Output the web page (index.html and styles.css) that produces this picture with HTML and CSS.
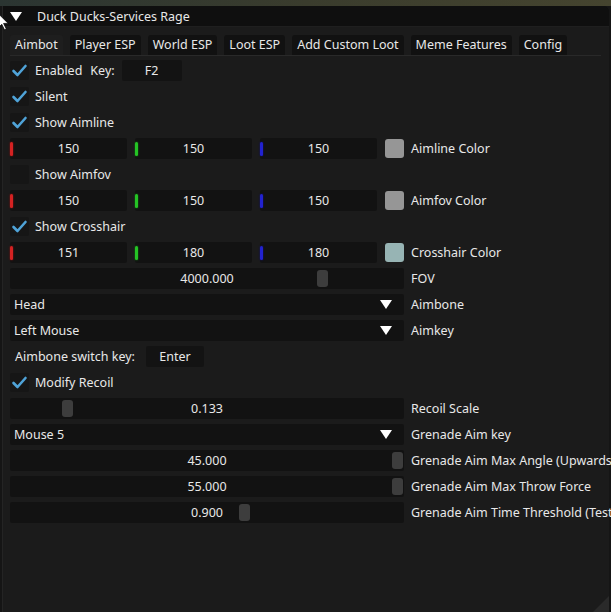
FILE: index.html
```html
<!DOCTYPE html>
<html lang="en">
<head>
    <meta charset="UTF-8">
    <title>Duck Ducks-Services Rage</title>
    <link rel="stylesheet" href="styles.css">
</head>
<body>
    <div class="scene"></div>

    <div class="window">
        <div class="titlebar">
            <span class="collapse"></span>
            <span>Duck Ducks-Services Rage</span>
        </div>

        <div class="content">
            <div class="tabs">
                <span class="tab active">Aimbot</span>
                <span class="tab">Player ESP</span>
                <span class="tab">World ESP</span>
                <span class="tab">Loot ESP</span>
                <span class="tab">Add Custom Loot</span>
                <span class="tab">Meme Features</span>
                <span class="tab">Config</span>
            </div>

            <div class="rows">
                <div class="row">
                    <span class="check on"><svg viewBox="0 0 19 19"><polyline points="3.5,10 7.5,14 15.5,5"/></svg></span>
                    <span>Enabled</span>
                    <span class="key-label">Key:</span>
                    <span class="keybox">F2</span>
                </div>
                <div class="row">
                    <span class="check on"><svg viewBox="0 0 19 19"><polyline points="3.5,10 7.5,14 15.5,5"/></svg></span>
                    <span>Silent</span>
                </div>
                <div class="row">
                    <span class="check on"><svg viewBox="0 0 19 19"><polyline points="3.5,10 7.5,14 15.5,5"/></svg></span>
                    <span>Show Aimline</span>
                </div>
                <div class="row">
                    <div class="color-edit">
                        <span class="channel r">150</span>
                        <span class="channel g">150</span>
                        <span class="channel b">150</span>
                        <span class="swatch" style="background: #969696;"></span>
                    </div>
                    <span class="label">Aimline Color</span>
                </div>
                <div class="row">
                    <span class="check"></span>
                    <span>Show Aimfov</span>
                </div>
                <div class="row">
                    <div class="color-edit">
                        <span class="channel r">150</span>
                        <span class="channel g">150</span>
                        <span class="channel b">150</span>
                        <span class="swatch" style="background: #969696;"></span>
                    </div>
                    <span class="label">Aimfov Color</span>
                </div>
                <div class="row">
                    <span class="check on"><svg viewBox="0 0 19 19"><polyline points="3.5,10 7.5,14 15.5,5"/></svg></span>
                    <span>Show Crosshair</span>
                </div>
                <div class="row">
                    <div class="color-edit">
                        <span class="channel r">151</span>
                        <span class="channel g">180</span>
                        <span class="channel b">180</span>
                        <span class="swatch" style="background: #97b4b4;"></span>
                    </div>
                    <span class="label">Crosshair Color</span>
                </div>
                <div class="row">
                    <div class="frame slider">4000.000<span class="grab" style="left: 307px;"></span></div>
                    <span class="label">FOV</span>
                </div>
                <div class="row">
                    <div class="frame combo">Head<span class="arrow"></span></div>
                    <span class="label">Aimbone</span>
                </div>
                <div class="row">
                    <div class="frame combo">Left Mouse<span class="arrow"></span></div>
                    <span class="label">Aimkey</span>
                </div>
                <div class="row">
                    <span class="indent">Aimbone switch key:</span>
                    <span class="keybox wide">Enter</span>
                </div>
                <div class="row">
                    <span class="check on"><svg viewBox="0 0 19 19"><polyline points="3.5,10 7.5,14 15.5,5"/></svg></span>
                    <span>Modify Recoil</span>
                </div>
                <div class="row">
                    <div class="frame slider">0.133<span class="grab" style="left: 52px;"></span></div>
                    <span class="label">Recoil Scale</span>
                </div>
                <div class="row">
                    <div class="frame combo">Mouse 5<span class="arrow"></span></div>
                    <span class="label">Grenade Aim key</span>
                </div>
                <div class="row">
                    <div class="frame slider">45.000<span class="grab" style="left: 382px;"></span></div>
                    <span class="label">Grenade Aim Max Angle (Upwards</span>
                </div>
                <div class="row">
                    <div class="frame slider">55.000<span class="grab" style="left: 382px;"></span></div>
                    <span class="label">Grenade Aim Max Throw Force</span>
                </div>
                <div class="row">
                    <div class="frame slider">0.900<span class="grab" style="left: 229px;"></span></div>
                    <span class="label">Grenade Aim Time Threshold (Test</span>
                </div>
            </div>
        </div>
        <span class="grip"></span>
    </div>

    <svg class="cursor" viewBox="0 0 12 18"><polygon points="0,0 0,14 3,11 6,17 8,16 5,10 10,10"/></svg>
</body>
</html>
```

FILE: styles.css
```css
html, body {
    margin: 0;
    padding: 0;
    height: 100%;
    overflow: hidden;
}
body {
    background-color: #151515;
    font-family: 'Noto Sans', 'Open Sans', sans-serif;
    font-size: 12.5px;
    color: #e8e8e8;
    position: relative;
}
.scene {
    height: 6px;
    background: linear-gradient(90deg, #2b3532, #3a3c2d 50%, #45442f);
}
.window {
    position: relative;
    margin-left: 2px;
    width: 606px;
    height: 620px;
    background-color: #1b1b1b;
    border-left: 1px solid #242424;
    border-radius: 0 5px 0 0;
}
.titlebar {
    height: 20px;
    display: flex;
    align-items: center;
    background-color: #0f0f0f;
    border-radius: 0 5px 0 0;
    border-bottom: 1px solid #1f1f1f;
    padding-left: 7px;
}
.collapse {
    width: 0;
    height: 0;
    border-left: 6px solid transparent;
    border-right: 6px solid transparent;
    border-top: 9px solid #ffffff;
    margin-right: 15px;
}
.content {
    padding: 8px 8px 0 7px;
}
.tabs {
    display: flex;
    gap: 7px;
    height: 20px;
    border-bottom: 1px solid #292929;
    margin-bottom: 4px;
}
.tab {
    padding: 0 5px;
    line-height: 19px;
    background-color: #111111;
    border-radius: 3px 3px 0 0;
}
.tab.active {
    background-color: #1e1e1e;
}
.rows {
    display: flex;
    flex-direction: column;
    gap: 5px;
}
.row {
    display: flex;
    align-items: center;
    height: 21px;
    white-space: nowrap;
}
.check {
    width: 19px;
    height: 19px;
    border-radius: 2px;
    background-color: #161616;
    margin-right: 6px;
    flex-shrink: 0;
}
.check svg {
    display: block;
    width: 19px;
    height: 19px;
}
.check polyline {
    fill: none;
    stroke: #4fa3d8;
    stroke-width: 2.6;
    stroke-linecap: round;
    stroke-linejoin: round;
}
.key-label {
    margin-left: 8px;
    margin-right: 7px;
}
.keybox {
    width: 60px;
    height: 21px;
    line-height: 21px;
    text-align: center;
    background-color: #131313;
    border-radius: 2px;
}
.keybox.wide {
    width: 58px;
    margin-left: 11px;
}
.indent {
    padding-left: 5px;
}
.color-edit {
    width: 394px;
    display: flex;
    align-items: center;
    gap: 8px;
}
.channel {
    position: relative;
    flex: 1;
    height: 21px;
    line-height: 21px;
    text-align: center;
    background-color: #121212;
    border-radius: 2px;
}
.channel::before {
    content: '';
    position: absolute;
    left: 0;
    top: 4px;
    width: 3px;
    height: 14px;
    border-radius: 2px;
}
.channel.r::before {
    background-color: #d42222;
    box-shadow: 0 0 2px #a01010;
}
.channel.g::before {
    background-color: #25c425;
    box-shadow: 0 0 2px #108a10;
}
.channel.b::before {
    background-color: #2222d0;
    box-shadow: 0 0 2px #10108a;
}
.swatch {
    width: 19px;
    height: 19px;
    border-radius: 3px;
    flex-shrink: 0;
}
.label {
    margin-left: 7px;
}
.frame {
    position: relative;
    width: 394px;
    height: 21px;
    line-height: 21px;
    background-color: #121212;
    border-radius: 2px;
    flex-shrink: 0;
}
.slider {
    text-align: center;
}
.grab {
    position: absolute;
    top: 2px;
    width: 11px;
    height: 17px;
    border-radius: 3px;
    background-color: #3d3d3d;
}
.combo {
    display: flex;
    align-items: center;
    padding-left: 4px;
    box-sizing: border-box;
}
.arrow {
    margin-left: auto;
    margin-right: 12px;
    width: 0;
    height: 0;
    border-left: 6px solid transparent;
    border-right: 6px solid transparent;
    border-top: 9px solid #ffffff;
}
.grip {
    position: absolute;
    right: 0;
    top: 590px;
    width: 0;
    height: 0;
    border-left: 16px solid transparent;
    border-bottom: 16px solid #2a2a2a;
}
.cursor {
    position: absolute;
    left: -1px;
    top: 14px;
    width: 11px;
    height: 17px;
}
.cursor polygon {
    fill: #ffffff;
    stroke: #000000;
    stroke-width: 0.8;
}
```
